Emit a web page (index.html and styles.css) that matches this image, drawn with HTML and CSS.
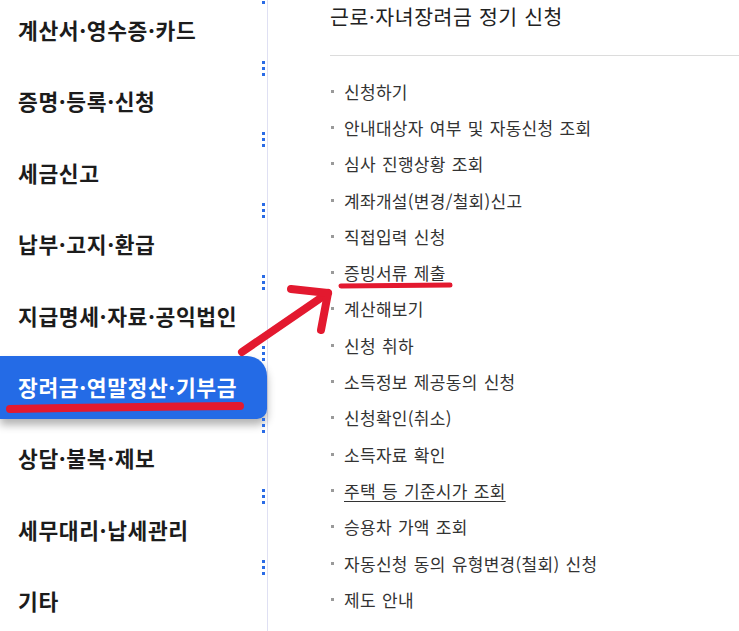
FILE: index.html
```html
<!DOCTYPE html>
<html lang="ko">
<head>
<meta charset="utf-8">
<title>장려금·연말정산·기부금</title>
<link rel="stylesheet" href="styles.css">
</head>
<body>
<div class="page">
  <nav class="side">
    <ul>
      <li><a>계산서·영수증·카드</a></li>
      <li><a>증명·등록·신청</a></li>
      <li><a>세금신고</a></li>
      <li><a>납부·고지·환급</a></li>
      <li><a>지급명세·자료·공익법인</a></li>
      <li class="active"><a>장려금·연말정산·기부금</a></li>
      <li><a>상담·불복·제보</a></li>
      <li><a>세무대리·납세관리</a></li>
      <li><a>기타</a></li>
    </ul>
  </nav>
  <main class="main">
    <h2 class="title">근로·자녀장려금 정기 신청</h2>
    <ul class="links">
      <li>신청하기</li>
      <li>안내대상자 여부 및 자동신청 조회</li>
      <li>심사 진행상황 조회</li>
      <li>계좌개설(변경/철회)신고</li>
      <li>직접입력 신청</li>
      <li>증빙서류 제출</li>
      <li>계산해보기</li>
      <li>신청 취하</li>
      <li>소득정보 제공동의 신청</li>
      <li>신청확인(취소)</li>
      <li>소득자료 확인</li>
      <li class="under">주택 등 기준시가 조회</li>
      <li>승용차 가액 조회</li>
      <li>자동신청 동의 유형변경(철회) 신청</li>
      <li>제도 안내</li>
    </ul>
  </main>
  <svg class="marks" width="739" height="631" viewBox="0 0 739 631">
    <path d="M10 409 Q120 407 240 406" />
    <path d="M242 352 L328 293" />
    <path d="M291 289 L328 293 L321 330" />
    <path class="thin" d="M341 286 L450 285" />
  </svg>
</div>
</body>
</html>
```

FILE: styles.css
```css
html, body {
  margin: 0;
  padding: 0;
  background: #fff;
}

body {
  font-family: "Noto Sans CJK KR", "Noto Sans", sans-serif;
}

.page {
  position: relative;
  display: flex;
  width: 739px;
  height: 631px;
  overflow: hidden;
}

.side {
  flex: none;
  width: 267px;
  border-right: 1.5px solid #dfe0f3;
}

.side ul {
  list-style: none;
  margin: -4.7px 0 0;
  padding: 0;
}

.side li {
  position: relative;
  height: 71.4px;
  padding: 4.2px 0;
  box-sizing: border-box;
}

.side li::before {
  content: "";
  position: absolute;
  right: 2px;
  top: -6px;
  width: 3px;
  height: 15px;
  background: repeating-linear-gradient(to bottom, #2a6be6 0 3px, transparent 3px 6px);
  z-index: 1;
}

.side a {
  display: flex;
  align-items: center;
  height: 100%;
  box-sizing: border-box;
  padding: 0 0 3px 18px;
  font-size: 21.5px;
  font-weight: 700;
  color: #1c1c1c;
  letter-spacing: 0.6px;
}

.side li.active a {
  background: #246be6;
  color: #fff;
  border-radius: 0 20px 10px 0;
  box-shadow: 0 6px 8px rgba(0, 0, 0, 0.3);
}

.main {
  flex: 1;
  padding-left: 62px;
}

.title {
  margin: 0;
  height: 55px;
  line-height: 33px;
  font-size: 20.5px;
  font-weight: 400;
  color: #222;
  letter-spacing: 0.6px;
  border-bottom: 1px solid #dcdcdc;
}

.links {
  list-style: none;
  margin: 0;
  padding: 17px 0 0;
}

.links li {
  display: flex;
  align-items: center;
  height: 36.3px;
  font-size: 17px;
  letter-spacing: 0.3px;
  word-spacing: 1px;
  color: #333;
}

.links li::before {
  content: "";
  flex: none;
  width: 3px;
  height: 3px;
  margin: 0 10px 0 1px;
  background: #9a9a9a;
}

.links li.under {
  text-decoration: underline;
  text-underline-offset: 3px;
}

.marks {
  position: absolute;
  left: 0;
  top: 0;
  pointer-events: none;
}

.marks path {
  fill: none;
  stroke: #e3192f;
  stroke-width: 8;
  stroke-linecap: round;
  stroke-linejoin: round;
}

.marks path.thin {
  stroke-width: 5;
}
```
